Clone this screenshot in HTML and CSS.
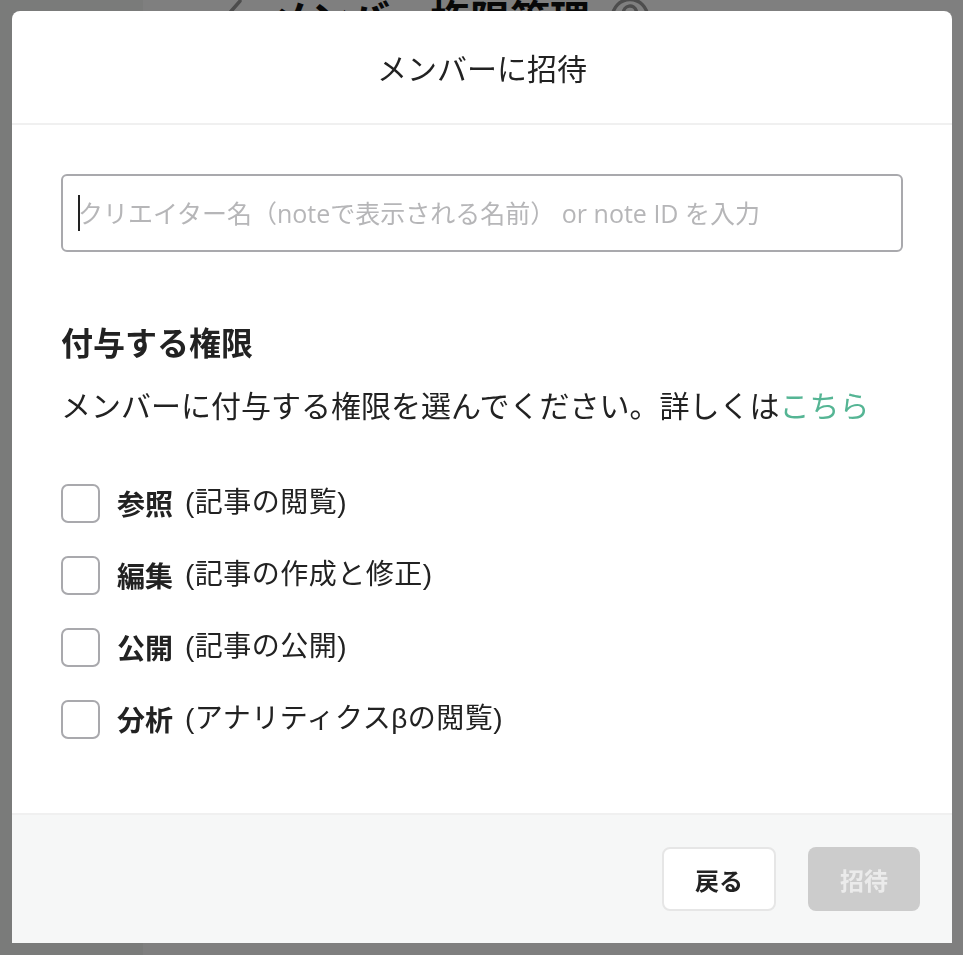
FILE: index.html
```html
<!DOCTYPE html>
<html lang="ja">
<head>
<meta charset="utf-8">
<title>メンバーに招待</title>
<link rel="stylesheet" href="styles.css">
</head>
<body>
<div class="page">
  <aside class="sidebar"></aside>
  <main class="main">
    <div class="page-head">
      <svg class="chev" width="22" height="36" viewBox="0 0 22 36"><polyline points="18,2 4,18 18,34" fill="none" stroke="#9a9a9a" stroke-width="3.5" stroke-linecap="round" stroke-linejoin="round"/></svg>
      <h1 class="page-title">メンバー権限管理</h1>
      <svg class="help" width="40" height="40" viewBox="0 0 40 40"><circle cx="20" cy="20" r="17.5" fill="none" stroke="#9a9a9a" stroke-width="3.5"/><path d="M13.5 15.5a6.5 6.5 0 1 1 9.5 5.8c-1.8 1-3 2.2-3 4.2" fill="none" stroke="#9a9a9a" stroke-width="3.5" stroke-linecap="round"/></svg>
    </div>
    <p class="page-lead">メンバーを招待して、記事の作成や公開、分析などの権限を付与できます。</p>
  </main>
</div>

<div class="overlay">
  <div class="modal">
    <header class="modal-head">
      <h2 class="modal-title">メンバーに招待</h2>
    </header>
    <div class="modal-body">
      <div class="field">
        <input class="field-input" type="text" placeholder="クリエイター名（noteで表示される名前） or note ID を入力">
        <span class="caret"></span>
      </div>
      <h3 class="section-title">付与する権限</h3>
      <p class="section-desc">メンバーに付与する権限を選んでください。詳しくは<a class="link" href="#">こちら</a></p>
      <ul class="perm-list">
        <li class="perm"><span class="box"></span><span class="perm-name">参照</span><span class="perm-note">(記事の閲覧)</span></li>
        <li class="perm"><span class="box"></span><span class="perm-name">編集</span><span class="perm-note">(記事の作成と修正)</span></li>
        <li class="perm"><span class="box"></span><span class="perm-name">公開</span><span class="perm-note">(記事の公開)</span></li>
        <li class="perm"><span class="box"></span><span class="perm-name">分析</span><span class="perm-note">(アナリティクスβの閲覧)</span></li>
      </ul>
    </div>
    <footer class="modal-foot">
      <button class="btn btn-back" type="button">戻る</button>
      <button class="btn btn-invite" type="button" disabled>招待</button>
    </footer>
  </div>
</div>
</body>
</html>
```

FILE: styles.css
```css
* { box-sizing: border-box; }

html, body {
  margin: 0;
  padding: 0;
  height: 100%;
}

body {
  font-family: "Liberation Sans", "Noto Sans CJK JP", sans-serif;
  color: #222;
  background: #fff;
  overflow: hidden;
}

.page {
  display: flex;
  height: 100%;
}

.sidebar {
  width: 143px;
  flex: none;
  background: #f4f6f4;
}

.main {
  flex: 1;
  min-width: 0;
  padding-left: 79px;
}

.page-head {
  display: flex;
  align-items: center;
  height: 34px;
}

.chev { flex: none; }

.page-title {
  margin: 0 0 0 26px;
  font-family: "Noto Sans CJK JP", sans-serif;
  font-size: 40px;
  font-weight: 700;
  line-height: 34px;
  color: #111;
  white-space: nowrap;
}

.help {
  flex: none;
  margin-left: 20px;
}

.page-lead {
  margin: 56px 0 0;
  font-family: "Noto Sans CJK JP", sans-serif;
  font-size: 22px;
  font-weight: 700;
  line-height: 32px;
  color: #111;
}

/* overlay + modal */
.overlay {
  position: fixed;
  inset: 0;
  background: rgba(0, 0, 0, 0.5);
  padding: 11px 11px 12px 12px;
  display: flex;
}

.modal {
  flex: 1;
  display: flex;
  flex-direction: column;
  background: #fff;
  border-radius: 8px 8px 0 0;
  overflow: hidden;
}

.modal-head {
  height: 114px;
  flex: none;
  border-bottom: 2px solid #f0f0f0;
  display: flex;
  align-items: center;
  justify-content: center;
}

.modal-title {
  margin: 0;
  font-family: "Noto Sans CJK JP", sans-serif;
  font-size: 30px;
  font-weight: 400;
  color: #222;
  line-height: 40px;
}

.modal-body {
  flex: 1;
  padding: 49px 49px 0;
}

.field {
  position: relative;
}

.field-input {
  display: block;
  width: 100%;
  height: 78px;
  border: 2px solid #a9a9ad;
  border-radius: 6px;
  padding: 0 16px 0 15px;
  font-family: "Open Sans", "Noto Sans CJK JP", sans-serif;
  font-size: 25px;
  color: #222;
  background: #fff;
  outline: none;
}

.field-input::placeholder {
  color: #b6b6b8;
}

.caret {
  position: absolute;
  left: 17px;
  top: 21px;
  width: 2px;
  height: 36px;
  background: #222;
}

.section-title {
  margin: 69px 0 0;
  font-family: "Noto Sans CJK JP", sans-serif;
  font-size: 32px;
  font-weight: 700;
  line-height: 40px;
  color: #222;
}

.section-desc {
  margin: 23px 0 0;
  font-family: "Noto Sans CJK JP", sans-serif;
  font-size: 30px;
  font-weight: 400;
  line-height: 40px;
  color: #222;
}

.link {
  color: #55b594;
  text-decoration: none;
}

.perm-list {
  list-style: none;
  margin: 59px 0 0;
  padding: 0;
  display: flex;
  flex-direction: column;
  gap: 32px;
}

.perm {
  display: flex;
  align-items: center;
  height: 40px;
  font-size: 28px;
  line-height: 40px;
}

.box {
  flex: none;
  width: 39px;
  height: 39px;
  border: 2px solid #a9a9ad;
  border-radius: 7px;
  margin-right: 17px;
  background: #fff;
}

.perm-name {
  font-family: "Noto Sans CJK JP", sans-serif;
  font-weight: 700;
  margin-right: 12px;
  color: #222;
}

.perm-note {
  font-weight: 400;
  color: #222;
  letter-spacing: 0.5px;
}

.modal-foot {
  height: 130px;
  flex: none;
  border-top: 2px solid #f0f0f0;
  background: #f6f7f7;
  display: flex;
  justify-content: flex-end;
  align-items: center;
  gap: 32px;
  padding: 0 32px;
}

.btn {
  height: 64px;
  border-radius: 8px;
  font-family: "Noto Sans CJK JP", sans-serif;
  font-size: 24px;
  font-weight: 700;
  padding: 0;
  cursor: pointer;
}

.btn-back {
  width: 114px;
  background: #fff;
  border: 2px solid #e6e6e6;
  color: #222;
}

.btn-invite {
  width: 112px;
  background: #cccccc;
  border: none;
  color: #ebebeb;
}
```
